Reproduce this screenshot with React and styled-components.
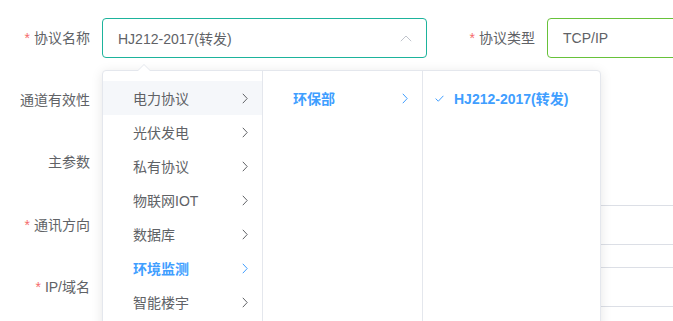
import React from "react";
import styled, { createGlobalStyle } from "styled-components";

const GlobalStyle = createGlobalStyle`
  html, body {
    margin: 0;
    padding: 0;
    background: #ffffff;
    overflow: hidden;
  }
  body {
    font-family: "Liberation Sans", "Noto Sans CJK SC", sans-serif;
    font-size: 14px;
    color: #606266;
  }
`;

const Page = styled.div`
  position: relative;
  width: 673px;
  height: 321px;
  padding-top: 18px;
  box-sizing: border-box;
  overflow: hidden;
`;

const FormRow = styled.div`
  display: flex;
  align-items: center;
  height: 40px;
  margin-bottom: ${(p) => p.$gap || 22}px;
`;

const FormItem = styled.div`
  display: flex;
  align-items: center;
  margin-left: ${(p) => p.$offset || 0}px;
`;

const Label = styled.label`
  width: 90px;
  margin-right: 12px;
  flex-shrink: 0;
  text-align: right;
  line-height: 40px;
  font-size: 14px;
  color: #606266;

  &::before {
    content: ${(p) => (p.$required ? '"*"' : "none")};
    color: #f56c6c;
    margin-right: 4px;
  }
`;

const Input = styled.div`
  box-sizing: border-box;
  flex-shrink: 0;
  width: ${(p) => p.$width}px;
  height: 40px;
  padding: 0 14px 0 15px;
  border: 1px solid ${(p) => p.$border || "#dcdfe6"};
  border-radius: 4px;
  display: flex;
  align-items: center;
  justify-content: space-between;
  color: #606266;
  font-size: 14px;
`;

const Panel = styled.div`
  position: absolute;
  left: 102px;
  top: 70px;
  height: 270px;
  display: flex;
  background: #ffffff;
  border: 1px solid #e4e7ed;
  border-radius: 4px;
  box-shadow: 0 2px 12px 0 rgba(0, 0, 0, 0.1);

  &::before,
  &::after {
    content: "";
    position: absolute;
    left: 35px;
    border-style: solid;
    border-color: transparent;
    border-top-width: 0;
  }
  &::before {
    top: -7px;
    border-width: 0 6px 6px 6px;
    border-bottom-color: #e4e7ed;
  }
  &::after {
    top: -6px;
    border-width: 0 6px 6px 6px;
    border-bottom-color: #ffffff;
  }
`;

const Menu = styled.ul`
  list-style: none;
  margin: 0;
  padding: 10px 0 0;
  width: ${(p) => p.$width}px;
  box-sizing: border-box;
  border-right: ${(p) => (p.$last ? "none" : "1px solid #e4e7ed")};
`;

const Item = styled.li`
  height: 34px;
  display: flex;
  align-items: center;
  justify-content: space-between;
  padding: 0 14px 0 30px;
  font-size: 14px;
  color: ${(p) => (p.$active ? "#409eff" : "#606266")};
  font-weight: ${(p) => (p.$active ? 700 : 400)};
  background: ${(p) => (p.$hover ? "#f5f7fa" : "transparent")};
`;

const LeafItem = styled.li`
  height: 34px;
  display: flex;
  align-items: center;
  gap: 10px;
  padding: 0 14px 0 12px;
  font-size: 14px;
  color: #409eff;
  font-weight: 700;
`;

const Chevron = ({ color = "#606266" }) => (
  <svg width="6" height="11" viewBox="0 0 6 11">
    <path d="M0.8 0.8 L5.2 5.5 L0.8 10.2" fill="none" stroke={color} strokeWidth="1" />
  </svg>
);

const ChevronUp = () => (
  <svg width="12" height="7" viewBox="0 0 12 7">
    <path d="M0.8 6.2 L6 1 L11.2 6.2" fill="none" stroke="#c0c4cc" strokeWidth="1" />
  </svg>
);

const Check = () => (
  <svg width="9" height="7" viewBox="0 0 9 7">
    <path d="M0.6 3.6 L3.3 6.2 L8.4 0.8" fill="none" stroke="#409eff" strokeWidth="1" />
  </svg>
);

const categories = [
  { name: "电力协议", hover: true },
  { name: "光伏发电" },
  { name: "私有协议" },
  { name: "物联网IOT" },
  { name: "数据库" },
  { name: "环境监测", active: true },
  { name: "智能楼宇" },
];

const App = () => {
  return (
    <>
      <GlobalStyle />
      <Page>
        <FormRow>
          <FormItem>
            <Label $required>协议名称</Label>
            <Input $width={325} $border="#1db39c">
              <span>HJ212-2017(转发)</span>
              <ChevronUp />
            </Input>
          </FormItem>
          <FormItem $offset={18}>
            <Label $required>协议类型</Label>
            <Input $width={300} $border="#67c23a">
              <span>TCP/IP</span>
            </Input>
          </FormItem>
        </FormRow>
        <FormRow>
          <FormItem>
            <Label>通道有效性</Label>
          </FormItem>
        </FormRow>
        <FormRow $gap={23}>
          <FormItem>
            <Label>主参数</Label>
          </FormItem>
        </FormRow>
        <FormRow>
          <FormItem>
            <Label $required>通讯方向</Label>
            <Input $width={620} />
          </FormItem>
        </FormRow>
        <FormRow>
          <FormItem>
            <Label $required>IP/域名</Label>
            <Input $width={620} />
          </FormItem>
        </FormRow>

        <Panel>
          <Menu $width={160}>
            {categories.map((c) => (
              <Item key={c.name} $active={c.active} $hover={c.hover}>
                <span>{c.name}</span>
                <Chevron color={c.active ? "#409eff" : "#606266"} />
              </Item>
            ))}
          </Menu>
          <Menu $width={160}>
            <Item $active>
              <span>环保部</span>
              <Chevron color="#409eff" />
            </Item>
          </Menu>
          <Menu $width={177} $last>
            <LeafItem>
              <Check />
              <span>HJ212-2017(转发)</span>
            </LeafItem>
          </Menu>
        </Panel>
      </Page>
    </>
  );
};

export default App;
